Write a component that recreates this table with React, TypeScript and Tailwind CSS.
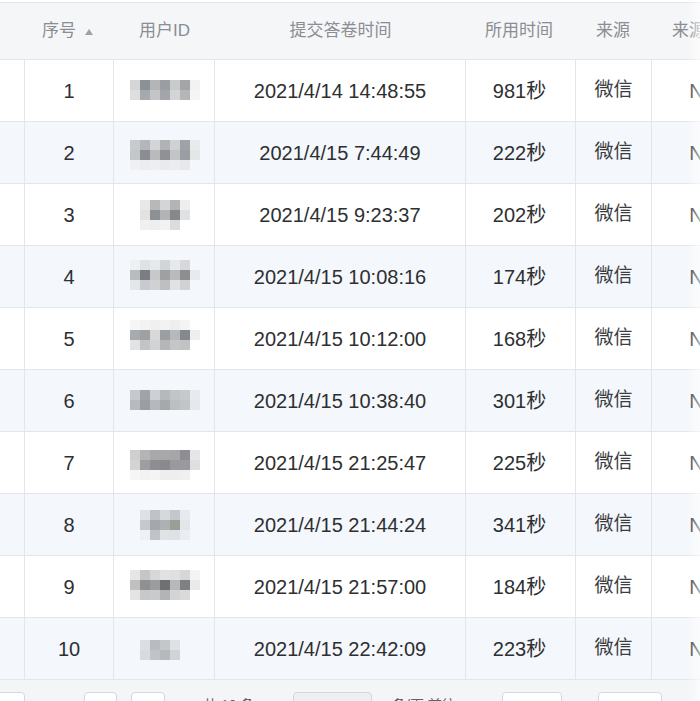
import React from "react";

type Mosaic = { x: number; y: number; cells: (string | null)[][] };

const rows: { n: number; time: string; dur: string; m: Mosaic }[] = [
  {
    n: 1,
    time: "2021/4/14 14:48:55",
    dur: "981秒",
    m: {
      x: 130,
      y: 20,
      cells: [
        ["#d6d6d6", "#8c9196", "#b4b5b6", "#9a9ea2", "#c9cacb", "#a3a5a7", "#f2f2f2"],
        ["#dedede", "#a6aaae", "#c4c5c6", "#a2a6aa", "#d4d5d6", "#b4b6b8", "#f5f5f5"],
      ],
    },
  },
  {
    n: 2,
    time: "2021/4/15 7:44:49",
    dur: "222秒",
    m: {
      x: 130,
      y: 18,
      cells: [
        ["#c8cbce", "#b4b7ba", "#d2d4d6", "#b0b2b4", "#cfd1d3", "#9fa3a7", "#e8eaec"],
        ["#c4c7ca", "#8a8d92", "#b8babc", "#8e9196", "#c2c4c6", "#9a9ea2", "#e4e6e8"],
        ["#eef0f3", "#eaecef", "#eceef1", "#e8eaed", "#eaecef", "#e6e8eb", null],
      ],
    },
  },
  {
    n: 3,
    time: "2021/4/15 9:23:37",
    dur: "202秒",
    m: {
      x: 140,
      y: 16,
      cells: [
        ["#e8e8e8", "#b6b8ba", "#d4d5d6", "#b2b4b6", "#eceeef"],
        ["#e2e2e2", "#8e9194", "#b2b3b4", "#86888b", "#dfe2e5"],
        ["#f0f0f0", "#eeeeee", "#f2f2f2", "#dcdcdc", null],
      ],
    },
  },
  {
    n: 4,
    time: "2021/4/15 10:08:16",
    dur: "174秒",
    m: {
      x: 130,
      y: 14,
      cells: [
        ["#eef1f4", "#dfe2e5", "#e6e8ea", "#d2d5d8", "#e6e8ea", "#d6d8da", null],
        ["#b9bcbf", "#7a7e83", "#c6c8ca", "#9ea1a4", "#b8babc", "#8c8f92", "#e8eaec"],
        ["#e4e6e9", "#c8cacd", "#cfd1d3", "#bdbfc1", "#e0e2e4", "#d0d2d4", null],
      ],
    },
  },
  {
    n: 5,
    time: "2021/4/15 10:12:00",
    dur: "168秒",
    m: {
      x: 130,
      y: 12,
      cells: [
        ["#f6f6f6", "#f2f2f2", "#f0f0f0", "#f2f2f2", "#eeeeee", "#f4f4f4", null],
        ["#a8abae", "#9ea1a4", "#d8d8d8", "#9c9fa2", "#b6b8ba", "#85888c", "#eceeef"],
        ["#e2e3e4", "#c2c4c6", "#d2d3d4", "#b4b6b8", "#c4c6c8", "#c0c2c4", null],
      ],
    },
  },
  {
    n: 6,
    time: "2021/4/15 10:38:40",
    dur: "301秒",
    m: {
      x: 130,
      y: 20,
      cells: [
        ["#c6c9cc", "#a0a4a8", "#ced1d4", "#b6b9bc", "#c2c5c8", "#c6c9cc", "#e8ebee"],
        ["#b8bbbe", "#9a9ea2", "#b6b9bc", "#a6a9ac", "#bcbfc2", "#c2c5c8", "#e6e9ec"],
      ],
    },
  },
  {
    n: 7,
    time: "2021/4/15 21:25:47",
    dur: "225秒",
    m: {
      x: 130,
      y: 18,
      cells: [
        ["#cfcfcf", "#b4b4b6", "#a8a8aa", "#a8a8aa", "#a6a6a8", "#8e8e92", "#e6e6e8"],
        ["#d4d4d4", "#9e9ea2", "#8e8e92", "#8a8a8e", "#9a9a9e", "#9a9a9e", "#dedfe2"],
        ["#f6f6f6", "#f2f2f2", "#f4f4f4", "#eeeeef", "#eeeef0", "#f0f0f0", null],
      ],
    },
  },
  {
    n: 8,
    time: "2021/4/15 21:44:24",
    dur: "341秒",
    m: {
      x: 140,
      y: 16,
      cells: [
        ["#dfe2e5", "#bfc3c7", "#d6d9dc", "#c4c8cc", "#e6eaee"],
        ["#c6c9cc", "#a4a8ac", "#aeb1b4", "#9a9d98", "#e2e6ea"],
        ["#eef1f4", "#c0c4c8", "#e0e3e6", "#dfe2e5", "#eaeef2"],
      ],
    },
  },
  {
    n: 9,
    time: "2021/4/15 21:57:00",
    dur: "184秒",
    m: {
      x: 130,
      y: 14,
      cells: [
        ["#e6e6e6", "#c4c6c8", "#d6d7d8", "#e2e2e2", "#e0e0e0", "#d6d7d8", "#f4f4f4"],
        ["#c0c0c0", "#8e9194", "#9a9c9e", "#6e7074", "#b6b8ba", "#7e8184", "#e8eaec"],
        ["#e4e4e4", "#c6c8ca", "#c8cacc", "#b2b4b6", "#d2d4d6", "#d8dadc", null],
      ],
    },
  },
  {
    n: 10,
    time: "2021/4/15 22:42:09",
    dur: "223秒",
    m: {
      x: 140,
      y: 22,
      cells: [
        ["#dcdfe2", "#b8bcc0", "#c4c7ca", "#dfe2e5"],
        ["#d8dbde", "#c0c4c8", "#b6b9bc", "#d2d5d8"],
      ],
    },
  },
];

function MosaicSvg({ m }: { m: Mosaic }) {
  const w = m.cells[0].length * 10;
  const h = m.cells.length * 10;
  return (
    <svg width={w} height={h} className="block" style={{ marginLeft: m.x - 114, marginTop: m.y }}>
      {m.cells.map((r, ri) =>
        r.map((c, ci) =>
          c ? <rect key={`${ri}-${ci}`} x={ci * 10} y={ri * 10} width={10} height={10} fill={c} /> : null
        )
      )}
    </svg>
  );
}

const font = { fontFamily: '"Liberation Sans", "Noto Sans CJK SC", Arial, sans-serif' };

export default function App() {
  return (
    <div className="relative w-[700px] h-[701px] overflow-hidden bg-white" style={font}>
      <div className="w-[759px]">
        {/* header */}
        <div className="mt-[2px] flex h-[58px] border-y border-[#e2e5ea] bg-[#f5f6f8] text-[17px] text-[#8a8d93]">
          <div className="w-[25px] shrink-0" />
          <div className="w-[89px] shrink-0 flex items-center justify-center gap-[9px] pr-[4px]">
            <span>序号</span>
            <svg width="8" height="6" viewBox="0 0 8 6" className="mt-[1px]">
              <path d="M4 0 L8 6 L0 6 Z" fill="#9ea2a8" />
            </svg>
          </div>
          <div className="w-[101px] shrink-0 flex items-center justify-center">用户ID</div>
          <div className="w-[251px] shrink-0 flex items-center justify-center">提交答卷时间</div>
          <div className="w-[110px] shrink-0 flex items-center justify-center pr-[4px]">所用时间</div>
          <div className="w-[76px] shrink-0 flex items-center justify-center pr-[2px]">来源</div>
          <div className="w-[108px] shrink-0 flex items-center justify-center">来源渠道</div>
        </div>
        {/* body */}
        {rows.map((r, i) => (
          <div
            key={r.n}
            className={`flex h-[62px] border-b border-[#e2e5ea] text-[20px] text-[#2e2f31] ${
              i % 2 === 1 ? "bg-[#f4f7fb]" : "bg-white"
            }`}
          >
            <div className="w-[25px] shrink-0 border-r border-[#e2e5ea]" />
            <div className="w-[89px] shrink-0 border-r border-[#e2e5ea] flex items-center justify-center">
              {r.n}
            </div>
            <div className="w-[101px] shrink-0 border-r border-[#e2e5ea]">
              <MosaicSvg m={r.m} />
            </div>
            <div className="w-[251px] shrink-0 border-r border-[#e2e5ea] flex items-center justify-center">
              {r.time}
            </div>
            <div className="w-[110px] shrink-0 border-r border-[#e2e5ea] flex items-center justify-center pr-[2px]">
              {r.dur}
            </div>
            <div className="w-[76px] shrink-0 border-r border-[#e2e5ea] flex items-center justify-center text-[19px] text-[#3a3c40]">
              微信
            </div>
            <div className="w-[108px] shrink-0 flex items-center justify-center">N/A</div>
          </div>
        ))}
        {/* pagination */}
        <div className="relative h-[21px] bg-[#f4f5f7] text-[14px] text-[#606266]">
          <div className="flex items-start pt-[12px]">
            <div className="ml-[-10px] h-[28px] w-[35px] shrink-0 rounded-[4px] border border-[#d4d7dc] bg-white" />
            <div className="ml-[59px] h-[28px] w-[33px] shrink-0 rounded-[4px] border border-[#d4d7dc] bg-white" />
            <div className="ml-[14px] h-[28px] w-[34px] shrink-0 rounded-[4px] border border-[#d4d7dc] bg-white" />
            <div className="ml-[38px] w-[90px] shrink-0 pt-[3px] leading-[20px]">共 10 条</div>
            <div className="h-[28px] w-[79px] shrink-0 rounded-[4px] border border-[#d4d7dc] bg-[#eeeff1]" />
            <div className="ml-[20px] w-[110px] shrink-0 pt-[3px] leading-[20px]">条/页 前往</div>
            <div className="h-[28px] w-[60px] shrink-0 rounded-[4px] border border-[#d4d7dc] bg-white" />
            <div className="ml-[36px] h-[28px] w-[64px] shrink-0 rounded-[4px] border border-[#d4d7dc] bg-white" />
          </div>
        </div>
      </div>
      <div className="pointer-events-none absolute right-0 top-0 h-full w-[14px] bg-gradient-to-r from-transparent to-white/60" />
    </div>
  );
}
